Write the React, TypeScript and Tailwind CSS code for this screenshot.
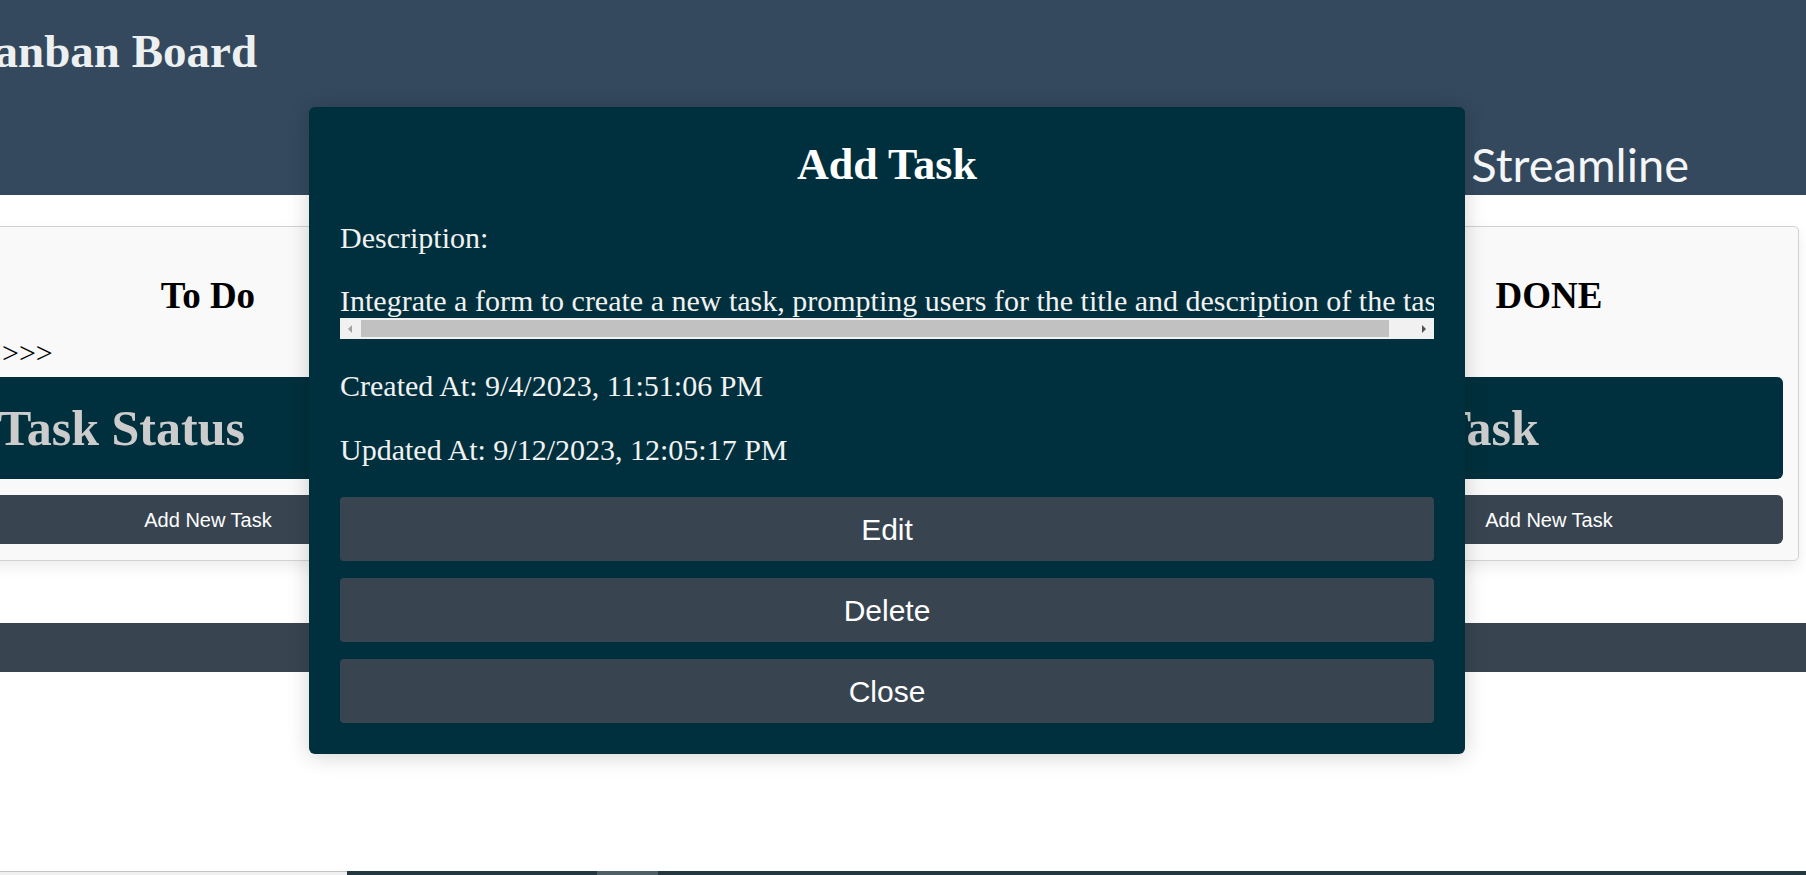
import { useState } from 'react'

const columns = [
  { title: 'To Do', arrows: '>>>', card: 'Task Status' },
  { title: 'In Progress', arrows: '', card: '' },
  { title: 'DONE', arrows: '<<<', card: 'Test Task' },
]

const serif = "font-['Liberation_Serif','Times_New_Roman',serif]"

const Column = ({ title, arrows, card }: { title: string; arrows: string; card: string }) => (
  <div className="w-[468px] flex flex-col">
    <h2 className={`${serif} text-center font-bold text-[37px] leading-[42px] text-black`}>{title}</h2>
    <p className={`${serif} mt-[19px] h-[34px] pl-[28px] text-[30px] leading-[34px] text-black`}>{arrows}</p>
    <div className="mt-[7px] h-[102px] flex items-center px-[24px] rounded-[6px] bg-[#00303d]">
      <h3 className={`${serif} font-bold text-[50px] leading-[56px] text-[#cccccc] whitespace-nowrap`}>{card}</h3>
    </div>
    <button className="mt-[16px] h-[49px] rounded-[6px] bg-[#384550] text-white text-[20px] font-['Liberation_Sans',Arial,sans-serif]">
      Add New Task
    </button>
  </div>
)

const ScrollBar = () => (
  <div className="h-[21px] flex items-center bg-[#f1f1f1]">
    <div className="w-[21px] h-full flex items-center justify-center">
      <svg width="5" height="8" viewBox="0 0 5 8"><path d="M4 0 L0 4 L4 8 Z" fill="#a3a3a3" /></svg>
    </div>
    <div className="flex-1 h-[17px] flex">
      <div className="w-[1028px] h-full bg-[#c1c1c1]" />
    </div>
    <div className="w-[21px] h-full flex items-center justify-center">
      <svg width="5" height="8" viewBox="0 0 5 8"><path d="M1 0 L5 4 L1 8 Z" fill="#505050" /></svg>
    </div>
  </div>
)

const TaskModal = () => {
  const buttons = ['Edit', 'Delete', 'Close']
  return (
    <div className="absolute left-[309px] top-[107px] w-[1156px] rounded-[6px] bg-[#00303d] px-[31px] pt-[33px] pb-[31px] shadow-[0_2px_22px_rgba(0,0,0,0.18)]">
      <h2 className={`${serif} text-center font-bold text-[44px] leading-[50px] text-white`}>Add Task</h2>
      <div className={`${serif} text-[30px] leading-[34px] text-[#f2f2f2]`}>
        <p className="mt-[31px]">Description:</p>
        <div className="mt-[29px]">
          <p className="overflow-hidden whitespace-nowrap">
            Integrate a form to create a new task, prompting users for the title and description of the task.
          </p>
          <ScrollBar />
        </div>
        <p className="mt-[30px]">Created At: 9/4/2023, 11:51:06 PM</p>
        <p className="mt-[30px]">Updated At: 9/12/2023, 12:05:17 PM</p>
      </div>
      <div className="mt-[30px] flex flex-col gap-[17px]">
        {buttons.map((b) => (
          <button
            key={b}
            className="h-[64px] rounded-[4px] bg-[#384550] text-white text-[30px] font-['Liberation_Sans',Arial,sans-serif]"
          >
            {b}
          </button>
        ))}
      </div>
    </div>
  )
}

export default function App() {
  const [open] = useState(true)

  return (
    <div className="relative h-[875px] w-full overflow-hidden bg-white flex flex-col">
      <div className="-ml-[42px] w-[1848px] flex-1 flex flex-col">
        <header className="h-[195px] bg-[#34495e] flex flex-col">
          <h1 className={`${serif} mt-[24px] font-bold text-[47px] leading-[54px] text-[#ecf0f1]`}>Kanban Board</h1>
          <nav className="mt-[57px] flex justify-end pr-[117px]">
            <span className="font-['Lato','Segoe_UI',sans-serif] text-[47px] leading-[58px] text-[#f4f6f7]">Streamline</span>
          </nav>
        </header>

        <main className="mt-[31px] w-[1841px] rounded-[5px] border border-[#d2d2d2] bg-[#f9f9f9] px-[15px] pt-[48px] pb-[16px] flex justify-between shadow-[0_6px_14px_rgba(0,0,0,0.08)]">
          {columns.map((c) =>
            c.card ? <Column key={c.title} {...c} /> : <div key={c.title} className="w-[468px]" />
          )}
        </main>

        <footer className="mt-[62px] h-[49px] bg-[#384550]" />
      </div>

      <div className="h-[4px] flex">
        <div className="w-[347px] bg-[#f0f0f0] border-t border-[#c4c4c4]" />
        <div className="w-[250px] bg-[#233840]" />
        <div className="w-[61px] bg-[#4f5f66]" />
        <div className="flex-1 bg-[#233840]" />
      </div>

      {open && <TaskModal />}
    </div>
  )
}
